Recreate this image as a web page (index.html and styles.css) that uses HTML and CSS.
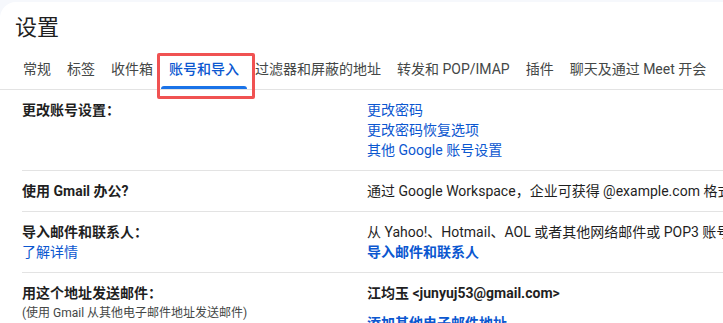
FILE: index.html
```html
<!DOCTYPE html>
<html lang="zh-CN">
<head>
    <meta charset="UTF-8">
    <title>设置</title>
    <link rel="stylesheet" href="styles.css">
</head>
<body>
<div class="panel">
    <h1 class="title">设置</h1>

    <div class="tabs">
        <a class="tab">常规</a>
        <a class="tab">标签</a>
        <a class="tab">收件箱</a>
        <a class="tab active">账号和导入<span class="mark"></span></a>
        <a class="tab">过滤器和屏蔽的地址</a>
        <a class="tab">转发和 POP/IMAP</a>
        <a class="tab">插件</a>
        <a class="tab">聊天及通过 Meet 开会</a>
    </div>

    <div class="rows">
        <div class="row">
            <div class="label">
                <b>更改账号设置：</b>
            </div>
            <div class="value">
                <a class="link">更改密码</a>
                <a class="link">更改密码恢复选项</a>
                <a class="link">其他 Google 账号设置</a>
            </div>
        </div>

        <div class="row">
            <div class="label">
                <b>使用 Gmail 办公?</b>
            </div>
            <div class="value">
                <span>通过 Google Workspace，企业可获得 @example.com 格式的电子邮件地址、更多存储空间和管理工具。</span>
            </div>
        </div>

        <div class="row">
            <div class="label">
                <b>导入邮件和联系人：</b>
                <a class="link">了解详情</a>
            </div>
            <div class="value">
                <span>从 Yahoo!、Hotmail、AOL 或者其他网络邮件或 POP3 账号导入邮件和联系人。</span>
                <a class="link strong">导入邮件和联系人</a>
            </div>
        </div>

        <div class="row">
            <div class="label">
                <b>用这个地址发送邮件：</b>
                <span class="hint">(使用 Gmail 从其他电子邮件地址发送邮件)</span>
            </div>
            <div class="value">
                <b>江均玉 &lt;junyuj53@gmail.com&gt;</b>
                <a class="link strong gap">添加其他电子邮件地址</a>
            </div>
        </div>
    </div>
</div>
</body>
</html>
```

FILE: styles.css
```css
html, body {
    margin: 0;
    height: 100%;
    overflow: hidden;
}
body {
    background: #f6f8fc;
    font-family: Roboto, "Noto Sans CJK SC", sans-serif;
    color: #1f1f1f;
}
.panel {
    margin-top: 2px;
    padding-top: 12px;
    height: 100%;
    background: #fff;
    border-radius: 16px 0 0 0;
}
.title {
    margin: 0;
    padding-left: 15px;
    font-size: 22px;
    font-weight: normal;
    line-height: 28px;
}
.tabs {
    display: flex;
    margin-top: 7px;
    padding-left: 15px;
    border-bottom: 1px solid #e3e3e3;
    white-space: nowrap;
}
.tab {
    position: relative;
    height: 40px;
    padding: 0 8px;
    font-size: 14px;
    line-height: 40px;
    color: #444746;
}
.tab.active {
    color: #0b57d0;
    font-weight: 500;
}
.tab.active::after {
    content: "";
    position: absolute;
    left: 0;
    right: 0;
    bottom: 0;
    height: 3px;
    background: #1a73e8;
    border-radius: 3px 3px 0 0;
}
/* red highlight frame drawn over the active tab */
.mark {
    position: absolute;
    left: -4px;
    right: -8px;
    top: 4px;
    bottom: -10px;
    border: 3px solid #f05252;
    border-radius: 2px;
}
.rows {
    padding-left: 22px;
}
.row {
    display: grid;
    grid-template-columns: 345px 1fr;
    padding: 10px 0;
    border-bottom: 1px solid #e3e3e3;
    font-size: 14px;
    line-height: 20px;
    white-space: nowrap;
}
.label, .value {
    display: flex;
    flex-direction: column;
    align-items: flex-start;
}
.label b, .value b {
    font-weight: bold;
}
.link {
    color: #0b57d0;
}
.link.strong {
    font-weight: bold;
}
.link.gap {
    margin-top: 10px;
}
.hint {
    font-size: 12px;
    color: #444746;
}
```
